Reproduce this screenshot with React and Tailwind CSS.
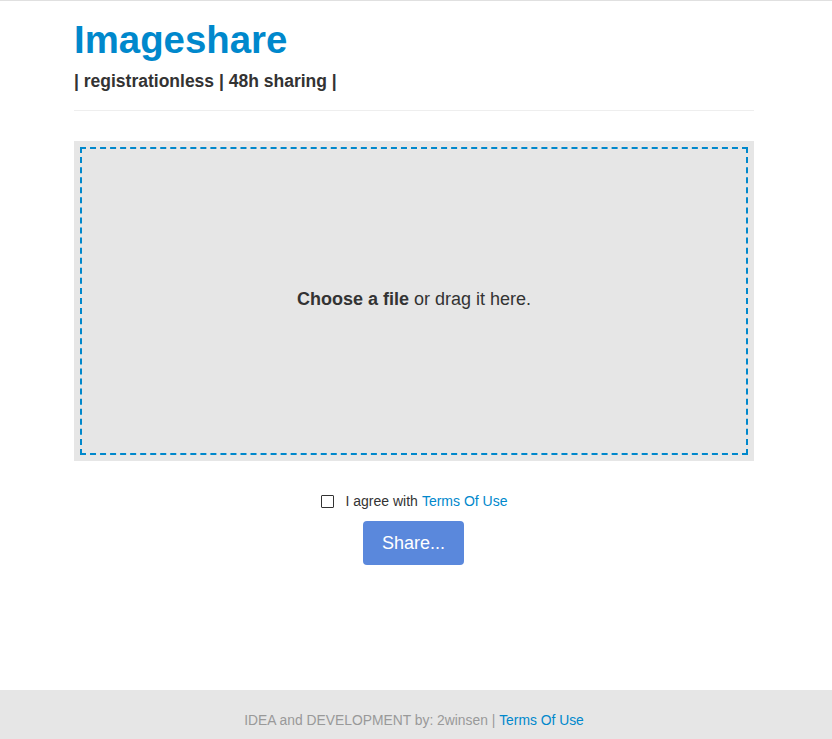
export default function App() {
  return (
    <div
      className="min-h-[739px] flex flex-col bg-white border-t border-[#e0e0e0] text-[#333]"
      style={{ fontFamily: '"Liberation Sans", Arial, sans-serif' }}
    >
      <div className="flex-1 pl-[74px]">
        <div className="w-[680px]">
          <header className="pt-[17px] pb-[18px] border-b border-[#eeeeee]">
            <h1 className="text-[38.4px] leading-[44px] font-bold text-[#0088cc]">Imageshare</h1>
            <p className="mt-[8px] text-[17.5px] leading-[22px] font-bold text-[#333]">
              | registrationless | 48h sharing |
            </p>
          </header>
          <div className="mt-[30px] h-[320px] bg-[#e6e6e6] p-[6px]">
            <div className="h-full border-2 border-dashed border-[#0088cc] flex items-center justify-center pb-[4px]">
              <p className="text-[18px] text-[#333]">
                <span className="font-bold">Choose a file</span> or drag it here.
              </p>
            </div>
          </div>
          <div className="mt-[32px] flex flex-col items-center">
            <label className="flex items-center text-[14px] leading-[16px] text-[#333]">
              <span className="w-[13px] h-[13px] border border-[#333] bg-white rounded-[1px] mr-[12px]"></span>
              I agree with <span className="text-[#0088cc] ml-[4px]">Terms Of Use</span>
            </label>
            <button className="mt-[12px] mr-[1px] w-[101px] h-[44px] bg-[#5a88dc] rounded-[4px] text-white text-[18px]">
              Share...
            </button>
          </div>
        </div>
      </div>
      <footer className="h-[49px] bg-[#e6e6e6] flex items-center justify-center pt-[12px] pr-[4px] text-[13.85px] text-[#999]">
        IDEA and DEVELOPMENT by: 2winsen |&nbsp;<span className="text-[#0088cc]">Terms Of Use</span>
      </footer>
    </div>
  );
}
